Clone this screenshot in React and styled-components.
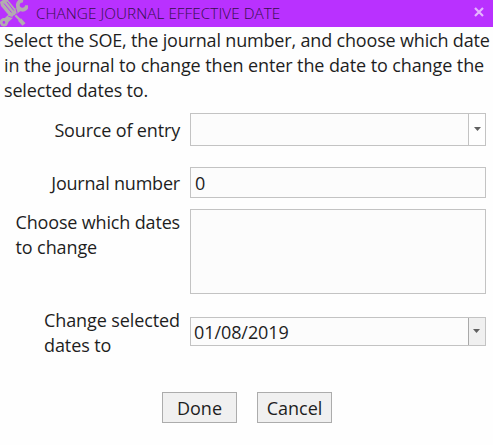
import styled, { createGlobalStyle } from 'styled-components'

const GlobalStyle = createGlobalStyle`
  html, body {
    margin: 0;
    padding: 0;
    background: #fefefe;
    overflow: hidden;
  }
  *, *::before, *::after {
    box-sizing: border-box;
  }
`

const Dialog = styled.main`
  width: 493px;
  height: 445px;
  display: flex;
  flex-direction: column;
  background: #fefefe;
  color: #1e1e1e;
  font-family: 'Open Sans', 'Noto Sans', sans-serif;
  font-size: 18px;
  line-height: 25px;
`

const TitleBar = styled.header`
  height: 27px;
  flex: none;
  display: flex;
  align-items: center;
  padding-right: 9px;
  background: #b931ff;
`

const Title = styled.h1`
  flex: 1;
  margin: -1px 0 0 8px;
  font-size: 15.3px;
  font-weight: 300;
  line-height: 26px;
  letter-spacing: 0.04px;
  white-space: nowrap;
  color: #35104a;
`

const CloseButton = styled.button`
  display: flex;
  padding: 0;
  border: 0;
  background: none;
  margin-top: -3px;
`

const Intro = styled.p`
  margin: 1px 0 0 4px;
  height: 76px;
  flex: none;
`

const Line = styled.span`
  display: block;
  white-space: nowrap;
  letter-spacing: ${p => p.$spacing || 0}px;
`

const Form = styled.div`
  display: grid;
  grid-template-columns: 180px 296px;
  grid-template-rows: 54px 42px 99px 50px;
  column-gap: 10px;
  padding-top: 9px;
`

const Label = styled.label`
  justify-self: end;
  padding-top: ${p => p.$top}px;
`

const Field = styled.div`
  display: flex;
  height: ${p => p.$height}px;
  margin-top: ${p => p.$top || 0}px;
  border: 1px solid #c3c3c3;
  background: #fcfcfc;
`

const Value = styled.span`
  flex: 1;
  padding-left: ${p => p.$inset || 3}px;
  line-height: ${p => p.$line}px;
  letter-spacing: ${p => p.$spacing || 0}px;
`

const DropButton = styled.button`
  width: 17px;
  display: flex;
  align-items: center;
  justify-content: flex-start;
  padding: 0 0 1px ${p => (p.$shaded ? 4 : 5)}px;
  border: 0;
  border-left: 1px solid ${p => (p.$shaded ? '#a9a9a9' : '#c3c3c3')};
  background: ${p => (p.$shaded ? '#f0f0f0' : '#fefefe')};
`

const Actions = styled.footer`
  display: flex;
  gap: 20px;
  margin: 34px 0 0 162px;
`

const ActionButton = styled.button`
  width: 75px;
  height: 31px;
  padding: 2px 0 0;
  border: 1px solid #acacac;
  background: #f0f0f0;
  color: inherit;
  font: inherit;
  line-height: 27px;
`

const ToolsIcon = () => (
  <svg width="28" height="27" viewBox="0 0 28 27" fill="none" stroke="#b3acb0">
    <path d="M11.5 15.5 4 22.5" strokeWidth="5.4" />
    <circle cx="4" cy="22.3" r="4.2" fill="#b3acb0" stroke="none" />
    <circle cx="3.9" cy="22.4" r="1.3" fill="#b931ff" stroke="none" />
    <path d="M14.5 12.5 20 8" strokeWidth="5.4" />
    <path d="M23.2 0.6A4.6 4.6 0 1 0 27 5.2" strokeWidth="3.8" />
    <path d="M14 14 21 21" strokeWidth="2.4" />
    <path d="M19.5 19.5 24 24.5" strokeWidth="4" />
    <path d="M0 2 3 0H8L15 8.6 16 13 12.5 16.4 8.5 15 1 6z" fill="#b3acb0" stroke="none" />
    <path d="M4 3.5 11.5 12.6M7 1.8 13.8 10.5" stroke="#b931ff" strokeWidth="0.9" />
    <path d="M8.2 16.2 12.5 17.6 17.2 13.2 15.9 8.4" stroke="#b931ff" strokeWidth="0.9" />
  </svg>
)

const CloseIcon = () => (
  <svg width="10" height="10" viewBox="0 0 10 10" stroke="#e6b5ff" strokeWidth="2.2">
    <path d="m1 1 8 8M9 1 1 9" />
  </svg>
)

const Arrow = () => (
  <svg width="7" height="4" viewBox="0 0 7 4" fill="#606060">
    <path d="M0 0h7L3.5 4z" />
  </svg>
)

const App = () => (
  <>
    <GlobalStyle />
    <Dialog>
      <TitleBar>
        <ToolsIcon />
        <Title>CHANGE JOURNAL EFFECTIVE DATE</Title>
        <CloseButton aria-label="Close"><CloseIcon /></CloseButton>
      </TitleBar>
      <Intro>
        <Line $spacing={-0.17}>Select the SOE, the journal number, and choose which date</Line>
        <Line $spacing={-0.1}>in the journal to change then enter the date to change the</Line>
        <Line $spacing={-0.16}>selected dates to.</Line>
      </Intro>
      <Form>
        <Label $top={5}><Line $spacing={-0.16}>Source of entry</Line></Label>
        <Field $height={33}>
          <Value />
          <DropButton aria-label="Open"><Arrow /></DropButton>
        </Field>
        <Label $top={4}><Line $spacing={-0.2}>Journal number</Line></Label>
        <Field $height={31}>
          <Value $line={30} $inset={4}>0</Value>
        </Field>
        <Label $top={1}>
          <Line $spacing={-0.16}>Choose which dates</Line>
          <Line $spacing={-0.1}>to change</Line>
        </Label>
        <Field $height={85} />
        <Label>
          <Line $spacing={-0.1}>Change selected</Line>
          <Line $spacing={-0.1}>dates to</Line>
        </Label>
        <Field $height={29} $top={9}>
          <Value $line={28} $spacing={-0.08}>01/08/2019</Value>
          <DropButton $shaded aria-label="Open calendar"><Arrow /></DropButton>
        </Field>
      </Form>
      <Actions>
        <ActionButton>Done</ActionButton>
        <ActionButton>Cancel</ActionButton>
      </Actions>
    </Dialog>
  </>
)

export default App
